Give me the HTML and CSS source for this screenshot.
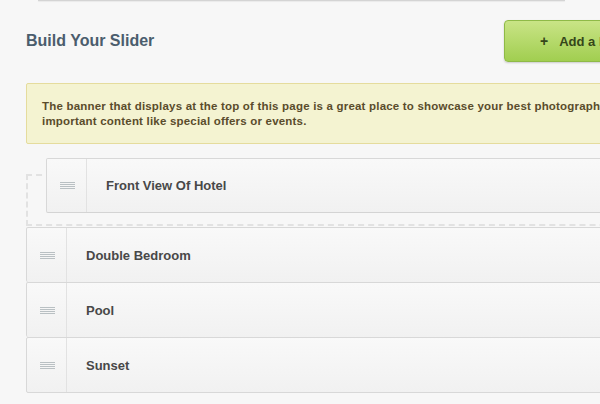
FILE: index.html
```html
<!DOCTYPE html>
<html lang="en">
<head>
<meta charset="utf-8">
<title>Build Your Slider</title>
<link rel="stylesheet" href="styles.css">
</head>
<body>
<div class="top-card"></div>
<main class="panel">
  <header class="panel-head">
    <h2 class="panel-title">Build Your Slider</h2>
    <button class="btn-add" type="button"><span class="btn-plus">+</span>Add a Banner</button>
  </header>
  <div class="notice">The banner that displays at the top of this page is a great place to showcase your best photography and<br>important content like special offers or events.</div>
  <ul class="slides">
    <li class="slide slide-dragging">
      <span class="slide-handle"><svg width="15" height="7" viewBox="0 0 15 7"><path d="M0 0.5H15M0 2.5H15M0 4.5H15M0 6.5H15" stroke="#b9c0c3" stroke-width="1"/></svg></span>
      <span class="slide-name">Front View Of Hotel</span>
    </li>
    <li class="slide-placeholder"></li>
    <li class="slide">
      <span class="slide-handle"><svg width="15" height="7" viewBox="0 0 15 7"><path d="M0 0.5H15M0 2.5H15M0 4.5H15M0 6.5H15" stroke="#b9c0c3" stroke-width="1"/></svg></span>
      <span class="slide-name">Double Bedroom</span>
    </li>
    <li class="slide">
      <span class="slide-handle"><svg width="15" height="7" viewBox="0 0 15 7"><path d="M0 0.5H15M0 2.5H15M0 4.5H15M0 6.5H15" stroke="#b9c0c3" stroke-width="1"/></svg></span>
      <span class="slide-name">Pool</span>
    </li>
    <li class="slide slide-last">
      <span class="slide-handle"><svg width="15" height="7" viewBox="0 0 15 7"><path d="M0 0.5H15M0 2.5H15M0 4.5H15M0 6.5H15" stroke="#b9c0c3" stroke-width="1"/></svg></span>
      <span class="slide-name">Sunset</span>
    </li>
  </ul>
</main>
</body>
</html>
```
FILE: styles.css
```css
html, body {
  margin: 0;
  padding: 0;
}
body {
  background: #f7f7f7;
  font-family: "Liberation Sans", Arial, Helvetica, sans-serif;
  overflow: hidden;
  width: 600px;
  height: 404px;
}
.top-card {
  height: 0;
  margin: 0 35px 0 38px;
  border-bottom: 1px solid #d4d4d4;
  box-shadow: 0 1px 1px rgba(0,0,0,0.06);
}
.panel {
  width: 640px;
  padding-left: 26px;
}
.panel-head {
  display: flex;
  align-items: center;
  justify-content: space-between;
  margin-top: 19px;
}
.panel-title {
  margin: 0;
  font-size: 16px;
  font-weight: bold;
  color: #4b5d6d;
}
.btn-add {
  display: flex;
  align-items: center;
  width: 162px;
  height: 42px;
  padding: 0 0 0 35px;
  border: 1px solid #8fba47;
  border-radius: 4px;
  background: linear-gradient(#c9e486, #a1ce50);
  box-shadow: 0 1px 2px rgba(0,0,0,0.18);
  font-family: inherit;
  font-size: 13px;
  font-weight: bold;
  color: #35461a;
}
.btn-plus {
  margin-right: 11px;
  font-size: 14px;
}
.notice {
  margin-top: 21px;
  padding: 15px 15px 14px;
  border: 1px solid #e5dc9d;
  border-radius: 2px;
  background: #f4f3d1;
  font-size: 11.5px;
  font-weight: bold;
  letter-spacing: 0.2px;
  line-height: 15px;
  color: #5a4c2c;
  white-space: nowrap;
}
.slides {
  position: relative;
  list-style: none;
  margin: 30px 0 0;
  padding: 0;
}
.slide {
  display: flex;
  align-items: stretch;
  height: 54px;
  border: 1px solid #d8d8d8;
  border-bottom: none;
  border-radius: 2px;
  background: linear-gradient(#f9f9f9, #f1f1f1);
  box-sizing: content-box;
}
.slide-last {
  border-bottom: 1px solid #d8d8d8;
}
.slide-handle {
  display: flex;
  align-items: center;
  justify-content: center;
  width: 38px;
  border-right: 1px solid #e2e2e2;
  padding-left: 1px;
}
.slide-name {
  display: flex;
  align-items: center;
  padding-left: 19px;
  font-size: 13px;
  font-weight: bold;
  color: #484848;
}
.slide-dragging {
  position: absolute;
  top: -16px;
  left: 20px;
  right: -20px;
  border-bottom: 1px solid #d4d4d4;
  height: 53px;
  z-index: 2;
}
.slide-placeholder {
  height: 48px;
  border: 2px dashed #e2e2e2;
  margin-bottom: 1px;
}
```
